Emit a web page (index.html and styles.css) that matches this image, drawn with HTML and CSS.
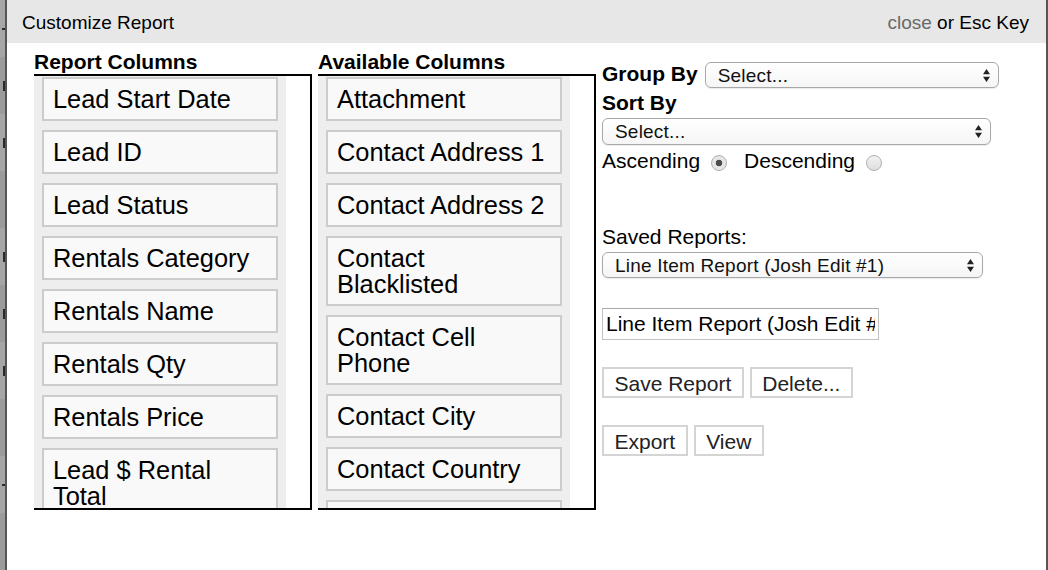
FILE: index.html
```html
<!DOCTYPE html>
<html>
<head>
<meta charset="utf-8">
<title>Customize Report</title>
<link rel="stylesheet" href="styles.css">
</head>
<body>
<div class="page">
  <div class="backdrop">
    <div class="bg-row"><i class="mark dash"></i></div>
    <div class="bg-row"><i class="mark"></i></div>
    <div class="bg-row"><i class="mark"></i></div>
    <div class="bg-row"></div>
    <div class="bg-row"><i class="mark"></i></div>
    <div class="bg-row"><i class="mark"></i></div>
    <div class="bg-row"><i class="mark"></i></div>
    <div class="bg-row"></div>
    <div class="bg-row"><i class="mark dash"></i></div>
    <div class="bg-row"></div>
  </div>
  <div class="modal">
    <div class="modal-head">
      <span class="title">Customize Report</span>
      <span class="closer"><a class="close-link">close</a> or Esc Key</span>
    </div>
    <div class="modal-body">
      <section class="col">
        <h3 class="col-title">Report Columns</h3>
        <div class="box">
          <ul class="list">
            <li class="item">Lead Start Date</li>
            <li class="item">Lead ID</li>
            <li class="item">Lead Status</li>
            <li class="item">Rentals Category</li>
            <li class="item">Rentals Name</li>
            <li class="item">Rentals Qty</li>
            <li class="item">Rentals Price</li>
            <li class="item">Lead $ Rental Total</li>
            <li class="item">Lead Total</li>
          </ul>
        </div>
      </section>
      <section class="col">
        <h3 class="col-title">Available Columns</h3>
        <div class="box">
          <ul class="list">
            <li class="item">Attachment</li>
            <li class="item">Contact Address 1</li>
            <li class="item">Contact Address 2</li>
            <li class="item">Contact Blacklisted</li>
            <li class="item">Contact Cell Phone</li>
            <li class="item">Contact City</li>
            <li class="item">Contact Country</li>
            <li class="item">Contact Email</li>
          </ul>
        </div>
      </section>
      <section class="opts">
        <div class="group-row">
          <span class="lbl-bold group-lbl">Group By</span>
          <div class="sel-wrap sel-group">
            <select class="sel"><option>Select...</option></select>
            <svg class="arrows" width="7" height="13" viewBox="0 0 7 13"><path d="M0 5.2 L3.5 0 L7 5.2 Z M0 7.8 L3.5 13 L7 7.8 Z" fill="#222"/></svg>
          </div>
        </div>
        <div class="lbl-bold sort-lbl">Sort By</div>
        <div class="sel-wrap sel-sort">
          <select class="sel"><option>Select...</option></select>
          <svg class="arrows" width="7" height="13" viewBox="0 0 7 13"><path d="M0 5.2 L3.5 0 L7 5.2 Z M0 7.8 L3.5 13 L7 7.8 Z" fill="#222"/></svg>
        </div>
        <div class="radio-row">
          <span>Ascending</span>
          <input class="radio r-asc" type="radio" name="dir" checked>
          <span>Descending</span>
          <input class="radio r-desc" type="radio" name="dir">
        </div>
        <div class="saved-lbl">Saved Reports:</div>
        <div class="sel-wrap sel-saved">
          <select class="sel"><option>Line Item Report (Josh Edit #1)</option></select>
          <svg class="arrows" width="7" height="13" viewBox="0 0 7 13"><path d="M0 5.2 L3.5 0 L7 5.2 Z M0 7.8 L3.5 13 L7 7.8 Z" fill="#222"/></svg>
        </div>
        <input class="name-input" type="text" value="Line Item Report (Josh Edit #1)">
        <div class="btn-row">
          <button class="btn">Save Report</button>
          <button class="btn">Delete...</button>
        </div>
        <div class="btn-row">
          <button class="btn">Export</button>
          <button class="btn">View</button>
        </div>
      </section>
    </div>
  </div>
</div>
</body>
</html>
```

FILE: styles.css
```css
html, body {
  margin: 0;
  padding: 0;
}
body {
  font-family: "Liberation Sans", Arial, Helvetica, sans-serif;
  color: #000;
  background: #fff;
}
.page {
  display: flex;
  width: 1048px;
  height: 570px;
  overflow: hidden;
}
.backdrop {
  flex: none;
  width: 5px;
  overflow: hidden;
  background: #a6a6a6;
}
.bg-row {
  height: 57px;
  display: flex;
  align-items: center;
  justify-content: flex-end;
}
.bg-row:nth-child(even) {
  background: #9b9b9b;
}
.mark {
  display: block;
  width: 2px;
  height: 10px;
  background: #2a2a2a;
}
.mark.dash {
  width: 3px;
  height: 2px;
}
.modal {
  flex: 1;
  border-left: 2px solid #555;
  border-right: 2px solid #555;
  background: #fff;
  display: flex;
  flex-direction: column;
}
.modal-head {
  flex: none;
  height: 43px;
  box-sizing: border-box;
  background: #e7e7e7;
  display: flex;
  justify-content: space-between;
  padding: 12px 17px 0 15px;
  font-size: 19px;
  line-height: 22px;
}
.close-link {
  color: #6a6a6a;
}
.modal-body {
  display: flex;
  gap: 6px;
  padding: 7px 0 0 27px;
}
.col {
  flex: none;
  width: 278px;
}
.col-title {
  margin: 0;
  font-size: 21px;
  font-weight: bold;
  line-height: 24px;
}
.box {
  height: 436px;
  box-sizing: border-box;
  border: 2px solid #000;
  border-left: none;
}
.list {
  list-style: none;
  margin: 0;
  width: 252px;
  height: 100%;
  box-sizing: border-box;
  padding: 1px 8px 0;
  background: #eeeeee;
  overflow: hidden;
}
.item {
  border: 2px solid #cccccc;
  background: #f9f9f9;
  padding: 7px 9px;
  font-size: 25.4px;
  line-height: 26px;
  margin-bottom: 9px;
}
.opts {
  flex: none;
  width: 420px;
  padding-top: 10px;
  font-size: 21px;
  line-height: 24px;
}
.lbl-bold {
  font-weight: bold;
}
.group-row {
  display: flex;
  align-items: flex-start;
}
.group-lbl {
  padding-top: 2px;
}
.sel-wrap {
  position: relative;
}
.sel-group {
  margin: 2px 0 0 7px;
  width: 294px;
}
.sort-lbl {
  margin-top: 3px;
}
.sel-sort {
  margin-top: 3px;
  width: 389px;
}
.sel-saved {
  margin-top: 3px;
  width: 381px;
}
.sel {
  -webkit-appearance: none;
  appearance: none;
  display: block;
  width: 100%;
  height: 26px;
  box-sizing: border-box;
  border: 1px solid #a8a8a8;
  border-radius: 6px;
  background: linear-gradient(#ffffff, #f5f5f5);
  padding: 0 24px 0 12px;
  margin: 0;
  font-family: "Liberation Sans", Arial, Helvetica, sans-serif;
  font-size: 19px;
  color: #111;
  letter-spacing: 0.2px;
  box-shadow: 0 1px 1px rgba(0, 0, 0, 0.08);
}
.sel-sort .sel {
  height: 27px;
}
.arrows {
  position: absolute;
  right: 9px;
  top: 50%;
  margin-top: -6.5px;
}
.radio-row {
  display: flex;
  align-items: center;
  margin-top: 4px;
  height: 24px;
}
.radio {
  -webkit-appearance: none;
  appearance: none;
  flex: none;
  width: 16px;
  height: 16px;
  margin: 4px 17px 0 11px;
  box-sizing: border-box;
  border: 1px solid #b0b0b0;
  border-radius: 50%;
  background: linear-gradient(#f2f2f2, #dedede);
}
.radio.r-asc {
  background: radial-gradient(circle, #4d4d4d 0, #4d4d4d 3px, #e6e6e6 3.6px);
}
.radio.r-desc {
  margin-right: 0;
}
.saved-lbl {
  margin-top: 52px;
}
.name-input {
  display: block;
  margin: 30px 0 0;
  width: 277px;
  height: 32px;
  box-sizing: border-box;
  border: 1px solid #c2c2c2;
  border-top-color: #a9a9a9;
  padding: 0 3px;
  font-family: "Liberation Sans", Arial, Helvetica, sans-serif;
  font-size: 21px;
  color: #000;
  background: #fff;
}
.btn-row {
  display: flex;
  gap: 6px;
  margin-top: 27px;
}
.btn {
  height: 31px;
  box-sizing: border-box;
  border: 2px solid #d4d4d4;
  background: #fff;
  padding: 3px 10.5px 0;
  margin: 0;
  font-family: "Liberation Sans", Arial, Helvetica, sans-serif;
  font-size: 21px;
  line-height: 24px;
  color: #222;
  border-radius: 0;
}
```
